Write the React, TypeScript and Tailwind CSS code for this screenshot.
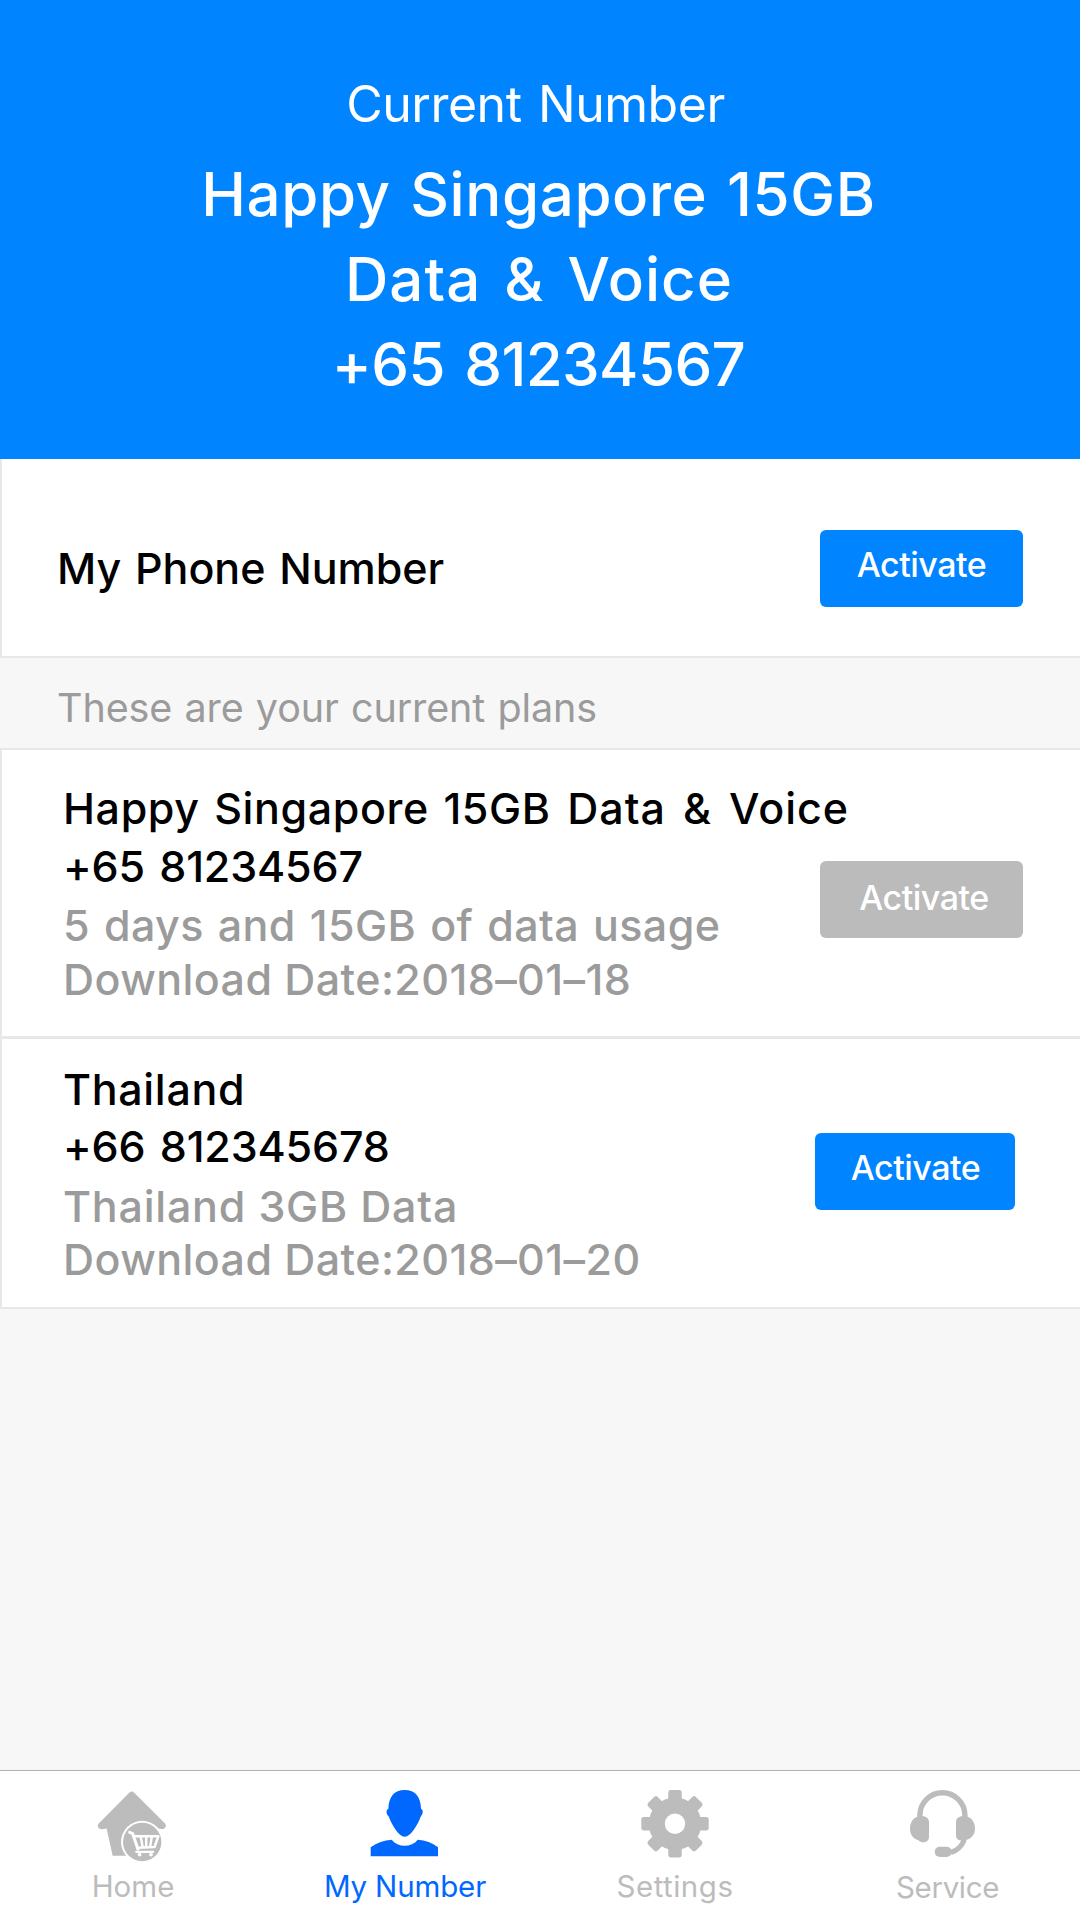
import type { ReactNode } from 'react';
import clsx from 'clsx';

const HomeIcon = () => (
  <svg viewBox="0 0 80 76" className="h-[76px] w-20" fill="currentColor">
    <path d="M34.2 4.8a3.6 3.6 0 0 1 5 0l30.6 30.4c2.4 2.5 0.4 6.2-3.3 5.8L62.6 40.6v27.1H17.7L11.6 40.6l-4.3.6c-4 .5-5.7-3-3.6-5.6z" />
    <rect x="44" y="62" width="24" height="12" fill="#fff" />
    <circle cx="47.2" cy="54" r="21.2" fill="#fff" />
    <circle cx="47.2" cy="54" r="19.2" />
    <g fill="none" stroke="#fff" strokeLinecap="round" strokeLinejoin="round">
      <path d="M34.6 44.4l3 1.2L43 61.2" strokeWidth="3" />
      <path d="M39 48.2h24.4l-3.8 10.8-17.6.8" strokeWidth="2.4" />
      <path d="M45.8 49l1.8 9.6M51.2 49v9.4M56.8 49l-1.6 9.4" strokeWidth="2.4" />
      <path d="M41.2 63.8h17" strokeWidth="2.2" />
    </g>
    <circle cx="44.6" cy="66.6" r="1.9" fill="#fff" />
    <circle cx="56" cy="66.6" r="1.9" fill="#fff" />
  </svg>
);

const UserIcon = () => (
  <svg viewBox="0 0 80 76" className="h-[76px] w-20" fill="currentColor">
    <path d="M39.7 2C29 2 23.6 9 23.4 20.8c-2.4.9-2.6 5.2.2 7.4C27 37 33.6 48.7 39.7 48.7S52.5 37 55.9 28.2c2.4-2.2 2.6-6.5.1-7.4C55.8 9 50.4 2 39.7 2z" />
    <path d="M5.7 68.3V59.2C12 54.8 19 52.3 26.7 51.7 30 55.7 34.5 57.7 39.7 57.7S49.5 55.7 52.8 51.7C60.5 52.3 67.3 54.8 73 59.2V68.3z" />
  </svg>
);

const GearIcon = () => (
  <svg viewBox="0 0 80 76" className="h-[76px] w-20" fill="currentColor">
    {[0, 45, 90, 135].map((angle) => (
      <rect key={angle} x="33.3" y="2" width="13.4" height="67.4" rx="2.6" transform={`rotate(${angle} 40 35.7)`} />
    ))}
    <circle cx="40" cy="35.7" r="26.3" />
    <circle cx="40" cy="35.7" r="10.2" fill="#fff" />
  </svg>
);

const HeadsetIcon = () => (
  <svg viewBox="0 0 80 76" className="h-[76px] w-20" fill="currentColor">
    <path d="M14.9 31v-3.7a22.5 22.5 0 0 1 45 0V31" fill="none" stroke="currentColor" strokeWidth="5.4" />
    <path d="M12.3 28.7C15 27.5 24 27.5 24 34V49c0 5.6-7.5 7-10.5 3.3C8 51 5 46.5 5 40.6S8 30 12.3 28.7z" />
    <path d="M62.7 28.7C60 27.5 51 27.5 51 34V47.5c0 5 5 5.5 9.5 4.8C66.5 51 70 46.5 70 40.6S67 30 62.7 28.7z" />
    <path d="M59.5 51.5C57 57.5 52.5 62.5 46 64.5" fill="none" stroke="currentColor" strokeWidth="5" />
    <rect x="29.7" y="58.7" width="17" height="10.3" rx="5.1" />
  </svg>
);

const ActivateButton = ({ className }: { className?: string }) => (
  <button
    className={clsx(
      'block h-[77px] shrink-0 rounded-md text-center text-[34px] leading-[41px] font-medium tracking-[-0.5px] text-white',
      className,
    )}
  >
    Activate
  </button>
);

const NavItem = ({ icon, label, active, labelClass }: { icon: ReactNode; label: string; active?: boolean; labelClass?: string }) => (
  <a className={clsx('flex flex-col items-center pt-[17px]', active ? 'text-[#0068ff]' : 'text-[#bcbcbc]')}>
    {icon}
    <span className={clsx('mt-1 text-[29.5px] leading-9 font-normal', labelClass)}>{label}</span>
  </a>
);

export default function App() {
  return (
    <div className="flex h-[1920px] w-[1080px] flex-col overflow-hidden bg-[#f7f7f7] font-['Inter','Liberation_Sans',sans-serif] whitespace-nowrap">
      <header className="h-[459px] shrink-0 bg-[#0084ff] pt-[74px] pr-[3px] text-center text-white">
        <p className="pr-[6px] text-[50px] leading-[60px] font-normal tracking-[-0.5px] [word-spacing:3px]">Current Number</p>
        <h1 className="mt-[18px] text-[60px] leading-[85px] font-medium">
          <span className="block tracking-[0.6px] [word-spacing:3px]">Happy Singapore 15GB</span>
          <span className="block pl-px tracking-[1px] [word-spacing:6px]">Data &amp; Voice</span>
          <span className="block tracking-[-0.6px] [word-spacing:4px]">+65 81234567</span>
        </h1>
      </header>

      <section className="flex h-[199px] shrink-0 items-start justify-between border-b-2 border-l-2 border-[#e8e8e8] bg-white pt-[71px] pr-[57px] pl-[55px]">
        <h2 className="mt-3 text-[43px] leading-[52px] font-medium text-black [word-spacing:2.2px]">My Phone Number</h2>
        <ActivateButton className="w-[203px] bg-[#0084ff] pb-[9px]" />
      </section>

      <p className="h-[90px] shrink-0 pt-[26px] pl-[57px] text-[39.5px] leading-[48px] font-normal tracking-[-0.1px] text-[#9b9b9b] [word-spacing:1.2px]">
        These are your current plans
      </p>

      <section className="flex h-[291px] shrink-0 items-start justify-between border-t-2 border-b-3 border-l-2 border-[#e8e8e8] bg-white pr-[57px] pl-[61px]">
        <div className="pt-[29px] text-[43px] text-black">
          <h3 className="w-[700px] leading-[58px] font-medium tracking-[0.6px] [word-spacing:2.6px]">
            Happy Singapore 15GB <span className="ml-[2px] tracking-[1px] [word-spacing:4.5px]">Data &amp; Voice</span>
          </h3>
          <p className="leading-[58px] font-medium tracking-[-0.15px] [word-spacing:3px]">+65 81234567</p>
          <div className="mt-[3px] leading-[54px] font-medium text-[#9b9b9b]">
            <p className="tracking-[0.4px] [word-spacing:2.1px]">5 days and 15GB of data usage</p>
            <p className="tracking-[0.42px]">Download Date:2018–01–18</p>
          </div>
        </div>
        <ActivateButton className="mt-[111px] w-[203px] bg-[#bbbbbb] pb-[4px] pl-[5px]" />
      </section>

      <section className="flex h-[270px] shrink-0 items-start justify-between border-b-2 border-l-2 border-[#e8e8e8] bg-white pr-[65px] pl-[61px]">
        <div className="pt-[22px] text-[43px] text-black">
          <h3 className="leading-[57px] font-medium tracking-[0.67px]">Thailand</h3>
          <p className="leading-[57px] font-medium tracking-[-0.15px] [word-spacing:3px]">+66 812345678</p>
          <div className="mt-[5px] leading-[53px] font-medium text-[#9b9b9b]">
            <p className="tracking-[0.78px]">Thailand 3GB Data</p>
            <p className="tracking-[0.42px]">Download Date:2018–01–20</p>
          </div>
        </div>
        <ActivateButton className="mt-[94px] w-[200px] bg-[#0084ff] pb-[8px] pl-[1px]" />
      </section>

      <nav className="mt-auto grid h-[150px] shrink-0 grid-cols-4 border-t border-[#b2b2b2] bg-white">
        <NavItem icon={<HomeIcon />} label="Home" labelClass="pr-[4px]" />
        <NavItem icon={<UserIcon />} label="My Number" labelClass="tracking-[-0.15px]" active />
        <NavItem icon={<GearIcon />} label="Settings" labelClass="tracking-[0.5px]" />
        <NavItem icon={<HeadsetIcon />} label="Service" labelClass="pt-px pl-[5px] tracking-[-0.35px]" />
      </nav>
    </div>
  );
}
